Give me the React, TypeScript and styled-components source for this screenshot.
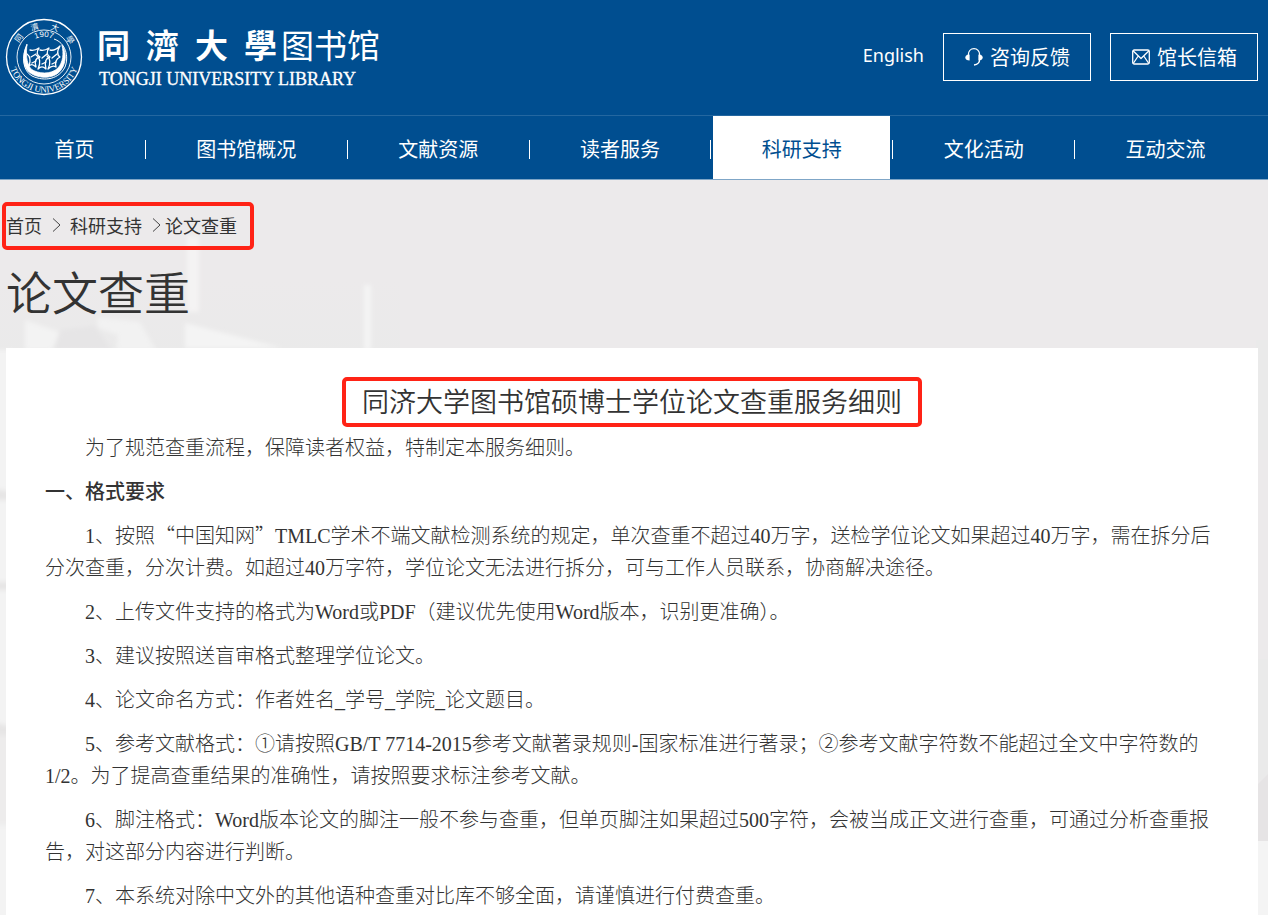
import React from "react";
import styled, { createGlobalStyle, css } from "styled-components";

const BLUE = "#004e90";
const SANS = `"Noto Sans", "Noto Sans CJK SC", sans-serif`;
const CJK = `"Noto Sans CJK SC", sans-serif`;

const GlobalStyle = createGlobalStyle`
  *, *::before, *::after { box-sizing: border-box; }
  body {
    margin: 0;
    background: #eceaeb;
    color: #333;
    font-family: ${CJK};
  }
  a { color: inherit; text-decoration: none; }
`;

const Page = styled.div`
  position: relative;
  isolation: isolate;
  height: 100vh;
  overflow: hidden;
  display: flex;
  flex-direction: column;
`;

const Header = styled.header`
  flex: none;
  background: ${BLUE};
  color: #fff;
`;

const TopBar = styled.div`
  display: flex;
  justify-content: space-between;
  align-items: center;
  height: 116px;
  padding: 0 10px 2px 5px;
  border-bottom: 1px solid #2467a0;
`;

const Brand = styled.a`
  display: flex;
  align-items: center;
  gap: 14px;
`;

const Seal = styled.svg`
  width: 78px;
  height: 78px;
  flex: none;
`;

const BrandText = styled.div`
  display: flex;
  flex-direction: column;
  padding-bottom: 4px;
`;

const BrandName = styled.div`
  display: flex;
  align-items: center;
  height: 48px;
  line-height: 44px;
`;

const Calligraphy = styled.span`
  display: flex;
  gap: 16px;
  padding-right: 4px;
  font-size: 33px;
  font-weight: 700;
`;

const LibraryName = styled.span`
  font-size: 33px;
  font-weight: 400;
`;

const BrandLatin = styled.div`
  padding-left: 2px;
  font-family: "Liberation Serif", serif;
  font-size: 18px;
  line-height: 22px;
  -webkit-text-stroke: 0.3px #fff;
`;

const Tools = styled.div`
  display: flex;
  align-items: center;
  gap: 19px;
`;

const Language = styled.a`
  padding-bottom: 3px;
  font-family: ${SANS};
  font-size: 18px;
  line-height: 28px;
`;

const ToolButton = styled.button`
  display: flex;
  align-items: center;
  justify-content: center;
  gap: 6px;
  width: 148px;
  height: 48px;
  padding: 0;
  border: 1px solid #fff;
  background: transparent;
  color: #fff;
  font-family: ${CJK};
  font-size: 20px;
  line-height: 28px;
`;

const ToolIcon = styled.svg`
  width: 20px;
  height: 20px;
  flex: none;
`;

const Nav = styled.nav`
  border-bottom: 1px solid #7fa6c7;
`;

const NavList = styled.ul`
  display: flex;
  margin: 0;
  padding: 0 14px 0 6px;
  list-style: none;
`;

const NavItem = styled.li`
  display: flex;
  flex: 1 1 auto;
  align-items: center;

  &:not(:last-child)::after {
    content: "";
    width: 1px;
    height: 19px;
    margin: 4px 2px 0 2px;
    background: #fff;
  }
`;

const NavLink = styled.a<{ $active?: boolean }>`
  flex: 1 1 auto;
  padding: 2px 48px 0;
  font-size: 20px;
  line-height: 61px;
  text-align: center;
  white-space: nowrap;
  ${(p) =>
    p.$active &&
    css`
      background: #fff;
      color: ${BLUE};
    `}
`;

const Backdrop = styled.svg`
  position: absolute;
  left: 0;
  top: 180px;
  z-index: -1;
  width: 400px;
  height: 735px;
`;

const BackdropRight = styled.svg`
  position: absolute;
  right: 0;
  top: 340px;
  z-index: -1;
  width: 30px;
  height: 575px;
`;

const Intro = styled.div`
  flex: none;
  padding: 22px 2px 0;
`;

const Breadcrumb = styled.nav`
  display: flex;
  align-items: center;
  width: max-content;
  height: 48px;
  padding: 0 13px 2px 0;
  border: 4px solid #ff2316;
  border-radius: 5px;
  font-size: 18px;
  line-height: 28px;
`;

const Chevron = styled.svg<{ $tight?: boolean }>`
  width: 9px;
  height: 16px;
  margin: 0 ${(p) => (p.$tight ? 4 : 9)}px 0 10px;
`;

const PageTitle = styled.h1`
  margin: 6px 0 0 4px;
  font-size: 46px;
  font-weight: 350;
  line-height: 68px;
`;

const Article = styled.article`
  flex: 1 0 auto;
  margin: 24px 10px 0 6px;
  padding: 29px 39px 12px;
  background: #fff;
`;

const ArticleTitle = styled.h2`
  width: max-content;
  margin: 0 auto 5px;
  padding: 0 16px 2px;
  border: 4px solid #ff2316;
  border-radius: 5px;
  font-size: 27px;
  font-weight: 350;
  line-height: 40px;
`;

const bodyText = css`
  margin: 0 0 12px;
  font-family: "Liberation Serif", "Noto Sans CJK SC", serif;
  font-size: 20px;
  line-height: 32px;
`;

const SectionTitle = styled.h3`
  ${bodyText}
  font-weight: 500;
`;

const Paragraph = styled.p`
  ${bodyText}
  font-weight: 300;
  text-indent: 2em;
`;

const FullWidth = styled.span`
  font-family: ${CJK};
  line-height: 20px;
`;

const navItems = [
  "首页",
  "图书馆概况",
  "文献资源",
  "读者服务",
  "科研支持",
  "文化活动",
  "互动交流",
];

const rules: React.ReactNode[] = [
  <>
    1、按照<FullWidth>“中国知网”</FullWidth>
    TMLC学术不端文献检测系统的规定，单次查重不超过40万字，送检学位论文如果超过40万字，需在拆分后分次查重，分次计费。如超过40万字符，学位论文无法进行拆分，可与工作人员联系，协商解决途径。
  </>,
  "2、上传文件支持的格式为Word或PDF（建议优先使用Word版本，识别更准确）。",
  "3、建议按照送盲审格式整理学位论文。",
  "4、论文命名方式：作者姓名_学号_学院_论文题目。",
  "5、参考文献格式：①请按照GB/T 7714-2015参考文献著录规则-国家标准进行著录；②参考文献字符数不能超过全文中字符数的1/2。为了提高查重结果的准确性，请按照要求标注参考文献。",
  "6、脚注格式：Word版本论文的脚注一般不参与查重，但单页脚注如果超过500字符，会被当成正文进行查重，可通过分析查重报告，对这部分内容进行判断。",
  "7、本系统对除中文外的其他语种查重对比库不够全面，请谨慎进行付费查重。",
];

function UniversitySeal() {
  return (
    <Seal viewBox="0 0 78 78" fill="none" stroke="#fff" aria-hidden="true">
      <defs>
        <path id="seal-bottom" d="M3.500 39A35.500 35.500 0 0 0 74.500 39" />
        <path id="seal-top" d="M10.500 39A28.500 28.500 0 0 1 67.500 39" />
        <path id="seal-year" d="M19 39A20 20 0 0 1 59 39" />
      </defs>
      <circle cx="39" cy="39" r="37.500" strokeWidth="1.300" />
      <circle cx="39" cy="39" r="27" strokeWidth="0.900" />
      <g fill="#fff" stroke="none" fontFamily="Liberation Serif, Noto Sans CJK SC, serif">
        <text fontSize="9">
          <textPath href="#seal-bottom" startOffset="50%" textAnchor="middle">
            TONGJI UNIVERSITY
          </textPath>
        </text>
        <text fontSize="8">
          <textPath href="#seal-top" startOffset="16%">同</textPath>
        </text>
        <text fontSize="8">
          <textPath href="#seal-top" startOffset="36%">濟</textPath>
        </text>
        <text fontSize="8">
          <textPath href="#seal-top" startOffset="57%">大</textPath>
        </text>
        <text fontSize="8">
          <textPath href="#seal-top" startOffset="77%">學</textPath>
        </text>
        <text fontSize="8" fontFamily="Liberation Sans, sans-serif">
          <textPath href="#seal-year" startOffset="50%" textAnchor="middle">
            1907
          </textPath>
        </text>
      </g>
      <path d="M49 21C61 25 64 39 60 49C54 61 40 64 27 58C18 53 16 39 22 27" strokeWidth="1" />
      <path
        d="M22 26C18 35 17 46 23 53C31 61 49 62 56 52C62 44 61 33 57 27C59 36 58 44 53 50C46 57 33 56 26 51C21 45 21 35 22 26Z"
        fill="#fff"
        strokeWidth="0.800"
      />
      <g strokeWidth="1.300" strokeLinecap="round" strokeLinejoin="round">
        <path d="M25 32C29 33 31 32 34 30C31 34 32 37 35 39C31 40 29 43 31 49C28 46 26 46 24 48C26 43 25 38 22 36" />
        <path d="M35 32C39 33 41 32 44 30C41 34 42 37 45 39C41 40 39 44 41 51C38 48 36 48 33 51C36 45 35 39 31 37" />
        <path d="M45 32C49 33 52 31 55 28C52 33 52 37 55 39C51 41 50 45 51 49C48 47 46 48 43 51C46 45 45 40 42 38" />
        <path d="M26 39L31 36M37 40L42 36M47 40L52 36M27 45L31 43M37 46L41 44M47 46L51 44" />
      </g>
    </Seal>
  );
}

function HeadsetIcon() {
  return (
    <ToolIcon viewBox="0 0 20 20" fill="none" stroke="#fff" strokeWidth="1.300" aria-hidden="true">
      <path d="M4.300 8C4.300 4 6.800 1.700 10 1.700S15.700 4 15.700 8V12C15.700 15.500 13.500 17.600 10 18" />
      <path d="M5.600 7.500V13.500C3 13.500 1.300 12.200 1.300 10.500S3 7.500 5.600 7.500Z" fill="#fff" stroke="none" />
      <path d="M14.400 7.500V13.500C17 13.500 18.700 12.200 18.700 10.500S17 7.500 14.400 7.500Z" fill="#fff" stroke="none" />
    </ToolIcon>
  );
}

function MailIcon() {
  return (
    <ToolIcon viewBox="0 0 20 20" fill="none" stroke="#fff" strokeWidth="1.300" strokeLinejoin="round" aria-hidden="true">
      <rect x="1.700" y="3" width="16.600" height="14" rx="1.500" />
      <path d="M2 3.800L10 11.500L18 3.800M2.200 16.500L7.200 9M17.800 16.500L12.800 9" />
    </ToolIcon>
  );
}

function CrumbArrow({ tight }: { tight?: boolean }) {
  return (
    <Chevron $tight={tight} viewBox="0 0 9 16" fill="none" stroke="#444" aria-hidden="true">
      <path d="M1 1.500L8 8L1 14.500" />
    </Chevron>
  );
}

function RoomBackdrop() {
  return (
    <>
      <Backdrop viewBox="0 0 400 735" aria-hidden="true">
        <defs>
          <filter id="soft" x="-20%" y="-20%" width="140%" height="140%">
            <feGaussianBlur stdDeviation="2" />
          </filter>
          <linearGradient id="floor" x1="0" y1="0" x2="0" y2="1">
            <stop offset="0" stopColor="#eceaeb" />
            <stop offset="1" stopColor="#eaeaea" />
          </linearGradient>
        </defs>
        <rect y="100" width="400" height="80" fill="url(#floor)" />
        <g filter="url(#soft)">
          <path d="M187 56H199V132H187Z" fill="#f4f3f3" />
          <path d="M185 143L282 168H185Z" fill="#f4f4f4" />
          <path d="M364 105H371V170H364Z" fill="#f4f4f4" />
          <path d="M25 140L60 152L52 170H25Z" fill="#f3f3f3" />
          <path d="M97 137L140 142L156 170H116L118 155L98 148Z" fill="#f2f2f2" />
          <path d="M60 150L95 146L112 170H54Z" fill="#e6e5e6" />
          <path d="M-10 170H12V750H-10Z" fill="#f3f3f3" />
          <path d="M-10 308L12 312V320H-10ZM-10 402H12V410H-10ZM-10 541L12 547V555H-10Z" fill="#e6e5e5" />
          <path d="M-10 555H12V645H-10Z" fill="#edecec" />
        </g>
      </Backdrop>
      <BackdropRight viewBox="0 0 30 575" aria-hidden="true">
        <path d="M18 0H30V110H18ZM18 319H30V440H18Z" fill="#eaeaea" />
        <path d="M18 446L30 434V501H18Z" fill="#e6e4e5" />
        <path d="M18 501H30V575H18Z" fill="#f4f4f4" />
      </BackdropRight>
    </>
  );
}

export default function App() {
  return (
    <Page lang="zh-CN">
      <GlobalStyle />
      <RoomBackdrop />
      <Header>
        <TopBar>
          <Brand href="#">
            <UniversitySeal />
            <BrandText>
              <BrandName>
                <Calligraphy>
                  <span>同</span>
                  <span>濟</span>
                  <span>大</span>
                  <span>學</span>
                </Calligraphy>
                <LibraryName>图书馆</LibraryName>
              </BrandName>
              <BrandLatin>TONGJI UNIVERSITY LIBRARY</BrandLatin>
            </BrandText>
          </Brand>
          <Tools>
            <Language href="#" lang="en">
              English
            </Language>
            <ToolButton type="button">
              <HeadsetIcon />
              咨询反馈
            </ToolButton>
            <ToolButton type="button">
              <MailIcon />
              馆长信箱
            </ToolButton>
          </Tools>
        </TopBar>
        <Nav>
          <NavList>
            {navItems.map((label) => (
              <NavItem key={label}>
                <NavLink href="#" $active={label === "科研支持"}>
                  {label}
                </NavLink>
              </NavItem>
            ))}
          </NavList>
        </Nav>
      </Header>
      <Intro>
        <Breadcrumb>
          <a href="#">首页</a>
          <CrumbArrow />
          <a href="#">科研支持</a>
          <CrumbArrow tight />
          <a href="#">论文查重</a>
        </Breadcrumb>
        <PageTitle>论文查重</PageTitle>
      </Intro>
      <Article>
        <ArticleTitle>同济大学图书馆硕博士学位论文查重服务细则</ArticleTitle>
        <Paragraph>为了规范查重流程，保障读者权益，特制定本服务细则。</Paragraph>
        <SectionTitle>一、格式要求</SectionTitle>
        {rules.map((rule, index) => (
          <Paragraph key={index}>{rule}</Paragraph>
        ))}
      </Article>
    </Page>
  );
}
